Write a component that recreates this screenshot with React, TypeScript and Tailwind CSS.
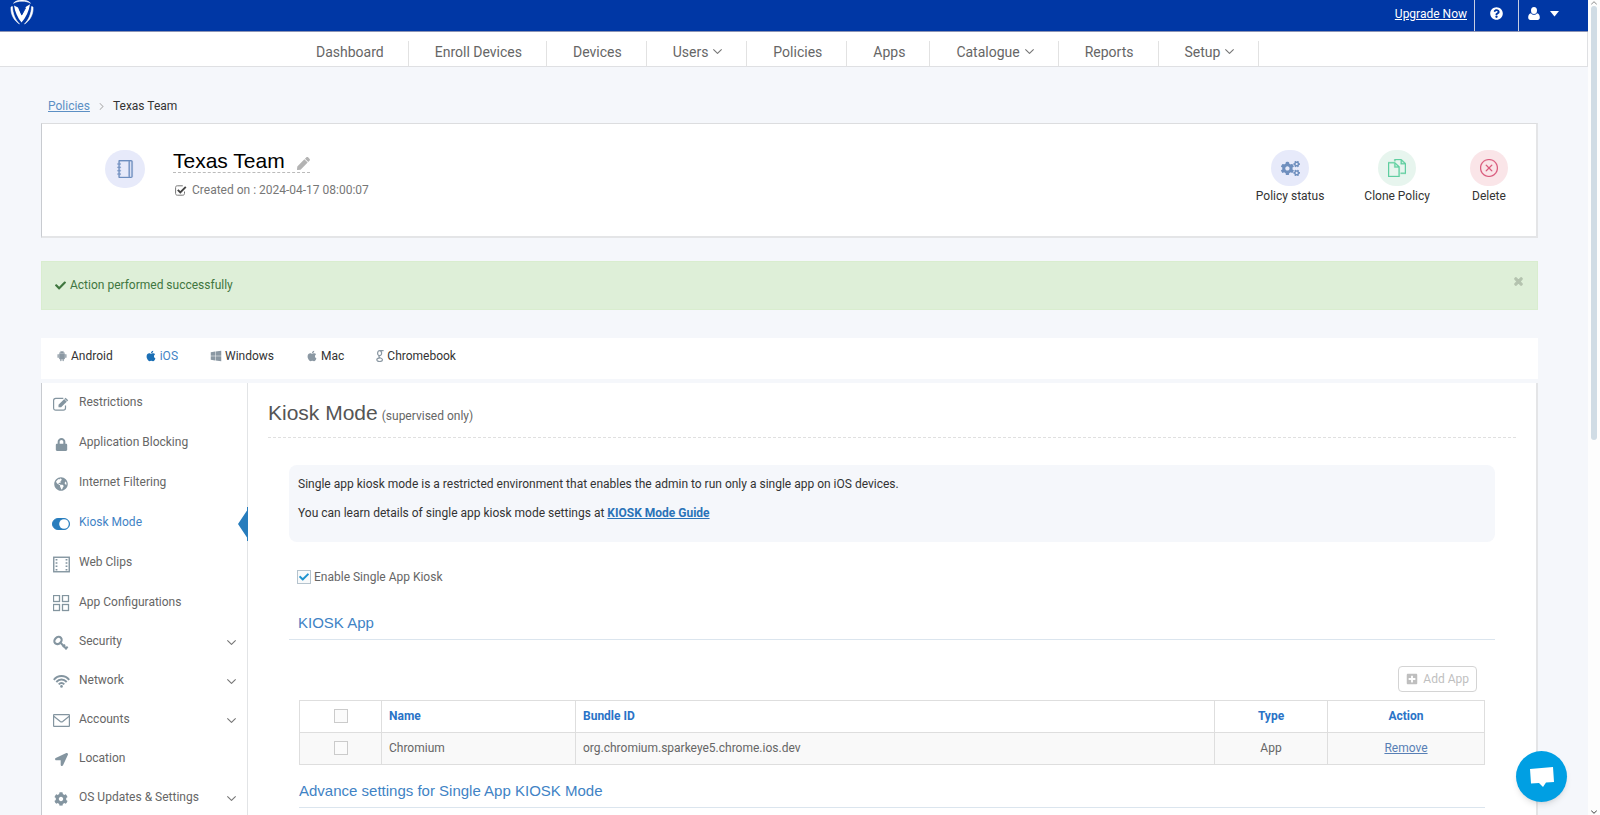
import type { ReactNode } from 'react';
import {
  FaApple,
  FaCheck,
  FaCog,
  FaCogs,
  FaGlobeAmericas,
  FaLocationArrow,
  FaLock,
  FaPen,
  FaPlusSquare,
  FaQuestionCircle,
  FaTimes,
  FaWindows,
} from 'react-icons/fa';
import { AiFillAndroid } from 'react-icons/ai';
import { TfiAngleDown, TfiFiles, TfiLayoutGrid2 } from 'react-icons/tfi';
import { SlClose, SlNotebook } from 'react-icons/sl';

const navItems = [
  { label: 'Dashboard' },
  { label: 'Enroll Devices' },
  { label: 'Devices' },
  { label: 'Users', menu: true },
  { label: 'Policies' },
  { label: 'Apps' },
  { label: 'Catalogue', menu: true },
  { label: 'Reports' },
  { label: 'Setup', menu: true },
];

function Logo() {
  return (
    <svg width="24" height="26" viewBox="0 0 24 26" fill="none" className="block">
      <path d="M3.500 3.200C5.500 1 8.500 0 12 0s6.500 1 8.500 3.200C18 1.800 15.200 1.200 12 1.200S6 1.800 3.500 3.200Z" fill="#fff" stroke="#fff" strokeWidth=".6" />
      <path d="M1 7c-.6 7 2.800 13.500 8.500 17C5.300 19.800 2.600 13.500 2.400 6.500Z" fill="#fff" stroke="#fff" strokeWidth=".6" />
      <path d="M23 7c.6 7-2.800 13.500-8.500 17 4.200-4.200 6.900-10.500 7.100-17.500Z" fill="#fff" stroke="#fff" strokeWidth=".6" />
      <path d="M4 5.500 8 7.500l3.500 8L16 6.800l4-2.600C19 11 16 17.500 11.500 22.500 7.500 17.500 5 12 4 5.500Z" fill="#fff" />
      <path d="m10 10 2 4.500L15.500 8" stroke="#0037a5" strokeWidth="1" />
    </svg>
  );
}

function UserIcon() {
  return (
    <svg width="12" height="13" viewBox="0 0 12 13" fill="currentColor">
      <ellipse cx="6" cy="3.500" rx="3" ry="3.500" />
      <path d="M3 6.200C1 6.600.2 8.200.2 10.600.2 12 1 13 2.400 13h7.200c1.400 0 2.200-1 2.200-2.400 0-2.400-.8-4-2.800-4.400C8.200 7.200 7.200 7.800 6 7.800S3.800 7.200 3 6.200Z" />
    </svg>
  );
}

function CaretIcon() {
  return (
    <svg width="9" height="6" viewBox="0 0 9 6" fill="currentColor" className="mt-1">
      <path d="M0 0h9L4.500 5.500Z" />
    </svg>
  );
}

function GoogleIcon() {
  return (
    <svg width="8" height="12" viewBox="0 0 8 12" fill="none" stroke="#8b98a3" strokeWidth="1.200">
      <ellipse cx="3.600" cy="3.200" rx="2" ry="2.500" />
      <path d="M7.600.7H4M3.500 5.800c-1 .8-.6 1.400.6 1.900 1.600.6 2.400 1.100 2.400 2.100 0 1.200-1.300 1.700-2.700 1.700S.8 11 .8 9.800s1.300-1.900 3.300-2" />
    </svg>
  );
}

function CheckedIcon() {
  return (
    <svg width="12" height="11" viewBox="0 0 12 11" fill="none" className="shrink-0">
      <path d="M9.500 6.500v2c0 1-.6 1.700-1.700 1.700H2.300C1.200 10.200.6 9.500.6 8.500v-6C.6 1.400 1.200.8 2.300.8h5.500" stroke="#777" />
      <path d="m2.800 4.800 2.500 2.600 5.500-5.600" stroke="#444" strokeWidth="1.900" />
    </svg>
  );
}

function EditIcon() {
  return (
    <svg width="17" height="14" viewBox="0 0 17 14" fill="none">
      <path d="M12.500 8.500V11c0 1.300-.8 2.200-2.200 2.200H2.800C1.400 13.200.6 12.300.6 11V3.500c0-1.300.8-2.200 2.200-2.200h7.500" stroke="currentColor" strokeWidth="1.200" />
      <path d="M5.500 10.200V7.700L12.600.8l2.600 2.500-7.100 6.900Z" fill="currentColor" />
      <path d="m11.200 1.800 2.900 2.800" stroke="#fff" strokeWidth=".7" />
    </svg>
  );
}

function FilmIcon() {
  return (
    <svg width="17" height="17" viewBox="0 0 17 17" fill="none" stroke="currentColor">
      <rect x=".75" y="1.250" width="15.500" height="14.500" strokeWidth="1.400" />
      <path d="M3.500 3v12M13.500 3v12" strokeWidth="1.800" strokeDasharray="1.500 1.800" />
    </svg>
  );
}

function KeyIcon() {
  return (
    <svg width="16" height="16" viewBox="0 0 16 16" fill="none" stroke="currentColor">
      <ellipse cx="5" cy="5.500" rx="4" ry="3.200" strokeWidth="2.200" transform="rotate(-45 5 5.500)" />
      <path d="m7.500 7.800 6.300 6.400M12 9.600 9.700 12M14.600 11.600l-2.400 2.600" strokeWidth="2" />
    </svg>
  );
}

function WifiIcon() {
  return (
    <svg width="17" height="13" viewBox="0 0 17 13" fill="none" stroke="currentColor" strokeWidth="1.900">
      <path d="M.8 4.800C5-.2 12-.2 16.200 4.800M3.300 7c3-3.300 7.400-3.300 10.400 0M5.700 9.300c1.700-1.700 3.900-1.700 5.600 0" />
      <circle cx="8.500" cy="11.400" r="1.300" fill="currentColor" stroke="none" />
    </svg>
  );
}

function MailIcon() {
  return (
    <svg width="17" height="13" viewBox="0 0 17 13" fill="none" stroke="currentColor" strokeWidth="1.200">
      <rect x=".6" y=".6" width="15.800" height="11.800" rx=".5" />
      <path d="m.8 2.200 6.500 5.300c.8.600 1.600.6 2.400 0l6.500-5.300" />
    </svg>
  );
}

function ToggleIcon() {
  return (
    <svg width="18" height="12" viewBox="0 0 18 12">
      <rect x=".5" y=".5" width="17" height="11" rx="5.500" fill="#287dbd" stroke="#287dbd" />
      <circle cx="12" cy="6" r="4.800" fill="#fff" />
    </svg>
  );
}

interface SideItem {
  label: string;
  icon: ReactNode;
  active?: boolean;
  group?: boolean;
}

const sideItems: SideItem[] = [
  { label: 'Restrictions', icon: <EditIcon /> },
  { label: 'Application Blocking', icon: <FaLock size={13} /> },
  { label: 'Internet Filtering', icon: <FaGlobeAmericas size={14} /> },
  { label: 'Kiosk Mode', icon: <ToggleIcon />, active: true },
  { label: 'Web Clips', icon: <FilmIcon /> },
  { label: 'App Configurations', icon: <TfiLayoutGrid2 size={17} strokeWidth={0.3} /> },
  { label: 'Security', icon: <KeyIcon />, group: true },
  { label: 'Network', icon: <WifiIcon />, group: true },
  { label: 'Accounts', icon: <MailIcon />, group: true },
  { label: 'Location', icon: <FaLocationArrow size={13} /> },
  { label: 'OS Updates & Settings', icon: <FaCog size={14} />, group: true },
];

const tabs = [
  { label: 'Android', icon: <AiFillAndroid size={12} /> },
  { label: 'iOS', icon: <FaApple size={12} />, active: true },
  { label: 'Windows', icon: <FaWindows size={12} /> },
  { label: 'Mac', icon: <FaApple size={12} /> },
  { label: 'Chromebook', icon: <GoogleIcon /> },
];

function TopBar() {
  return (
    <header className="flex h-8 justify-between border-b border-[#8c93b4] bg-[#0037a5] pl-[10px] text-white">
      <a href="#" aria-label="Home">
        <Logo />
      </a>
      <div className="flex items-stretch">
        <a href="#" className="px-[7px] pt-[6px] text-xs underline">Upgrade Now</a>
        <button aria-label="Help" className="flex w-11 items-start justify-center border-l border-[#c6cde2] pt-[7px]">
          <FaQuestionCircle size={13} />
        </button>
        <button aria-label="Account" className="flex w-[70px] items-start gap-[10px] border-l border-[#c6cde2] pt-[7px] pl-[9px]">
          <UserIcon />
          <CaretIcon />
        </button>
      </div>
    </header>
  );
}

function NavBar() {
  return (
    <nav className="flex h-[35px] items-end border-r border-b border-[#dfe0e3] bg-white pl-[290px] text-sm text-[#666]">
      {navItems.map((item) => (
        <a key={item.label} href="#" className="flex h-[25px] items-center gap-[5px] border-r border-[#e2e2e2] pr-6 pb-1 pl-[26px]">
          {item.label}
          {item.menu && <TfiAngleDown size={9} strokeWidth={1} />}
        </a>
      ))}
    </nav>
  );
}

interface PolicyActionProps {
  label: string;
  icon: ReactNode;
  tone: string;
}

function PolicyAction({ label, icon, tone }: PolicyActionProps) {
  return (
    <button className="flex flex-col items-center gap-[2px] text-xs text-[#333]">
      <span className={`flex h-9 w-[38px] items-center justify-center rounded-full ${tone}`}>{icon}</span>
      {label}
    </button>
  );
}

function PolicyCard() {
  return (
    <section className="flex h-[115px] justify-between border-t border-r-2 border-b-2 border-l border-t-[#dcdddf] border-r-[#e4e5e7] border-b-[#e4e5e7] border-l-[#c8cbd0] bg-white pt-[26px] pr-7 pl-[63px]">
      <div className="flex items-start gap-7">
        <span className="flex h-[38px] w-10 items-center justify-center rounded-full bg-[#e7eafa] text-[#6f8fc0]">
          <SlNotebook size={18} strokeWidth={20} />
        </span>
        <div>
          <h1 className="flex h-[23px] w-fit items-center gap-3 border-b border-dashed border-[#bbb] font-['Liberation_Sans',sans-serif] text-[21px] text-black">
            Texas Team
            <FaPen size={13} className="mt-1 text-[#b3b3b3]" />
          </h1>
          <p className="mt-[9px] flex items-center gap-[5px] pl-[2px] text-xs text-[#777]">
            <CheckedIcon />
            Created on : 2024-04-17 08:00:07
          </p>
        </div>
      </div>
      <div className="flex items-start gap-10">
        <PolicyAction label="Policy status" tone="bg-[#e7eafa] text-[#6f8fbe]" icon={<FaCogs size={19} />} />
        <PolicyAction label="Clone Policy" tone="bg-[#e7f5ee] text-[#5fd0a0]" icon={<TfiFiles size={18} strokeWidth={0.3} />} />
        <PolicyAction label="Delete" tone="bg-[#fae5e8] text-[#d9577a]" icon={<SlClose size={18} strokeWidth={10} />} />
      </div>
    </section>
  );
}

function Sidebar() {
  return (
    <aside className="w-[206px] shrink-0 border-r border-[#e2e4e6] pt-px">
      {sideItems.map((item, i) => (
        <a
          key={item.label}
          href="#"
          className={`relative flex items-center gap-2 pl-[9px] text-xs ${i < 5 ? 'h-10' : 'h-[39px]'} ${item.active ? 'text-[#3f83c5]' : 'text-[#666]'}`}
        >
          <span className="flex w-5 justify-center text-[#8495a0]">{item.icon}</span>
          <span className="pb-1">{item.label}</span>
          {item.group && <TfiAngleDown size={9} strokeWidth={1} className="mr-[11px] ml-auto" />}
          {item.active && (
            <svg width="10" height="34" viewBox="0 0 10 34" className="absolute -right-px">
              <path d="M9 3.500v27L0 17ZM9 0h1v34H9Z" fill="#287dbd" />
            </svg>
          )}
        </a>
      ))}
    </aside>
  );
}

function Box({ id, label }: { id: string; label: string }) {
  return (
    <input
      id={id}
      type="checkbox"
      aria-label={label}
      className="mx-auto block size-[14px] appearance-none border border-[#cbcbcb] bg-[#fbfbfb]"
    />
  );
}

function AppTable() {
  return (
    <table className="w-full table-fixed border-collapse text-xs text-[#666] [&_td]:border [&_td]:border-[#dedede] [&_td]:px-[7px] [&_td]:pb-px [&_th]:border [&_th]:border-[#dedede] [&_th]:px-[7px] [&_th]:pb-px">
      <colgroup>
        <col className="w-[82px]" />
        <col className="w-[194px]" />
        <col />
        <col className="w-[113px]" />
        <col className="w-[157px]" />
      </colgroup>
      <thead>
        <tr className="h-8 text-left text-[#2a73c7] [&_th]:font-bold">
          <th><Box id="all-apps" label="Select all apps" /></th>
          <th>Name</th>
          <th>Bundle ID</th>
          <th className="text-center">Type</th>
          <th className="text-center">Action</th>
        </tr>
      </thead>
      <tbody>
        <tr className="h-8 bg-[#f9f9f9]">
          <td><Box id="app-chromium" label="Select Chromium" /></td>
          <td>Chromium</td>
          <td>org.chromium.sparkeye5.chrome.ios.dev</td>
          <td className="text-center">App</td>
          <td className="text-center">
            <a href="#" className="text-[#587fb5] underline">Remove</a>
          </td>
        </tr>
      </tbody>
    </table>
  );
}

function KioskPanel() {
  return (
    <main className="min-w-0 flex-1 pr-5 pl-5">
      <h2 className="flex h-[55px] items-baseline gap-1 border-b border-dashed border-[#e0e0e0] pt-[14px] font-['Liberation_Sans',sans-serif] text-[21px] text-[#555]">
        Kiosk Mode
        <small className="font-['Roboto',sans-serif] text-xs text-[#666]">(supervised only)</small>
      </h2>
      <div className="pr-[21px] pl-[21px]">
        <div className="mt-[27px] h-[77px] rounded-lg bg-[#f5f7fb] px-[9px] pt-[11px] text-xs text-[#333]">
          <p>Single app kiosk mode is a restricted environment that enables the admin to run only a single app on iOS devices.</p>
          <p className="mt-[13px]">
            You can learn details of single app kiosk mode settings at{' '}
            <a href="#" className="font-bold text-[#2a73b8] underline">KIOSK Mode Guide</a>
          </p>
        </div>
        <div className="mt-[27px] flex items-center gap-[3px] pl-2">
          <span className="relative flex">
            <input id="single-app" type="checkbox" defaultChecked className="size-[14px] appearance-none border border-[#b5c3cd] bg-[#f8fafb]" />
            <FaCheck size={10} className="pointer-events-none absolute top-[2px] left-[2px] text-[#1e93cf]" />
          </span>
          <label htmlFor="single-app" className="text-xs text-[#666]">Enable Single App Kiosk</label>
        </div>
        <h3 className="mt-7 h-[27px] border-b border-[#dbe5ee] pl-[9px] font-['Liberation_Sans',sans-serif] text-[15px] leading-5 text-[#3f83c5]">
          KIOSK App
        </h3>
        <div className="pr-[10px] pl-[10px]">
          <div className="flex justify-end pt-[26px] pr-2 pb-2">
            <button disabled className="flex h-[26px] items-center gap-[5px] rounded border border-[#d4d4d4] px-[7px] text-xs text-[#bfbfbf]">
              <FaPlusSquare size={12} />
              Add App
            </button>
          </div>
          <AppTable />
          <h3 className="mt-4 h-[27px] border-b border-[#dbe5ee] font-['Liberation_Sans',sans-serif] text-[15px] leading-5 text-[#3f83c5]">
            Advance settings for Single App KIOSK Mode
          </h3>
        </div>
      </div>
    </main>
  );
}

export default function App() {
  return (
    <div className="flex h-screen overflow-hidden bg-[#f5f7fb] font-['Roboto',sans-serif]">
      <div className="min-w-0 flex-1">
        <TopBar />
        <NavBar />
        <div className="pr-[50px] pl-[41px]">
          <div className="flex h-14 items-end gap-2 pb-[9px] pl-[7px] text-xs text-[#333]">
            <a href="#" className="text-[#5c8fc4] underline">Policies</a>
            <TfiAngleDown size={7} strokeWidth={1} className="mb-1 -rotate-90 text-[#aaa]" />
            <span>Texas Team</span>
          </div>
          <PolicyCard />
          <div className="mt-[23px] flex h-[49px] justify-between border border-[#d9edcf] bg-[#deefd8] pt-[15px] pr-[13px] pl-[13px] text-xs text-[#3f763f]">
            <p className="flex h-4 items-center gap-1">
              <FaCheck size={11} />
              Action performed successfully
            </p>
            <button aria-label="Close" className="flex h-[9px] items-center text-[#b3c2ae]">
              <FaTimes size={11} strokeWidth={50} />
            </button>
          </div>
          <div className="mt-7 flex h-[41px] items-start bg-white pl-[15px] text-xs text-[#333]">
            {tabs.map((tab) => (
              <a key={tab.label} href="#" className={`mr-8 flex items-center gap-[3px] pt-[10px] ${tab.active ? 'text-[#3f83c5]' : ''}`}>
                <span className={tab.active ? 'text-[#1b6fb5]' : 'text-[#8b98a3]'}>{tab.icon}</span>
                {tab.label}
              </a>
            ))}
          </div>
          <div className="mt-1 flex border-r-2 border-l border-r-[#e4e5e7] border-l-[#c8cbd0] bg-white">
            <Sidebar />
            <KioskPanel />
          </div>
        </div>
      </div>
      <div className="flex w-3 flex-col items-center justify-between bg-[#fdfdfd]">
        <div className="flex h-[54%] w-full flex-col items-center">
          <TfiAngleDown size={6} strokeWidth={1} className="rotate-180 text-[#888]" />
          <div className="w-[6px] flex-1 rounded-full bg-[#d0dce5]" />
        </div>
        <TfiAngleDown size={6} strokeWidth={1} className="text-[#333]" />
      </div>
      <button aria-label="Open chat" className="fixed right-[33px] bottom-[13px] flex size-[51px] items-center justify-center rounded-full bg-[#009fe3] shadow-md">
        <svg width="26" height="22" viewBox="0 0 26 22">
          <path d="m1 3 23-2 1 15-8 .6-3 4.400-4-4-8 .5Z" fill="#fff" />
        </svg>
      </button>
    </div>
  );
}
